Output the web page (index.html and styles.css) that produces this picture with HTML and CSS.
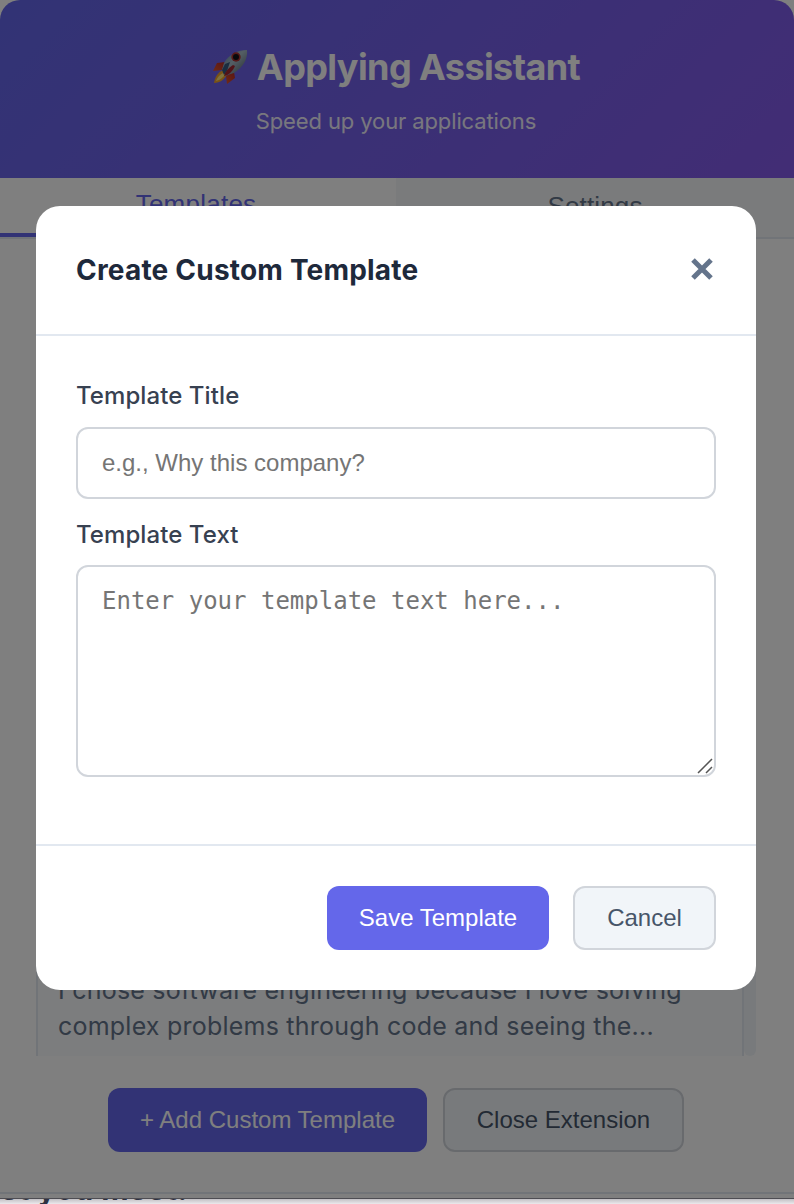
FILE: index.html
```html
<!DOCTYPE html>
<html lang="en">
<head>
<meta charset="utf-8">
<title>Applying Assistant</title>
<link rel="stylesheet" href="styles.css">
</head>
<body>
<div class="popup">
  <header class="header">
    <h1 class="brand">
      <svg class="rocket" viewBox="0 0 36 36">
        <defs>
          <linearGradient id="hull" x1="0" y1="0" x2="1" y2="1">
            <stop offset="0" stop-color="#477aa8"/><stop offset=".45" stop-color="#a9bdc9"/><stop offset="1" stop-color="#4b5b66"/>
          </linearGradient>
          <linearGradient id="fin" x1="1" y1="0" x2="0" y2="1">
            <stop offset="0" stop-color="#b52a25"/><stop offset="1" stop-color="#e0552b"/>
          </linearGradient>
        </defs>
        <path d="M13 13 5 14 1 22l9-1z" fill="url(#fin)"/>
        <path d="M22 23l1 6-8 6-1-8z" fill="url(#fin)"/>
        <path d="M11 21c-5 2-8 7-9 13 6 0 11-4 13-9z" fill="#f3a52a"/>
        <path d="M11 24c-4 2-6 5-7 8 4-1 8-4 9-7z" fill="#ffe77a"/>
        <path d="M35 1C26 1 17 5 12 14l-2 7 5 5 7-2C31 18 36 10 35 1z" fill="url(#hull)"/>
        <path d="M10 21l3-6 5-2-3 9-3 4z" fill="#355a80"/>
        <path d="M21 16c-5 3-8 7-9 11 5-1 9-5 11-10z" fill="#a32730"/>
        <circle cx="24" cy="8" r="4.7" fill="#ad3030"/>
        <circle cx="24" cy="8" r="3" fill="#111318"/>
      </svg>
      <span>Applying Assistant</span>
    </h1>
    <p class="tagline">Speed up your applications</p>
  </header>
  <nav class="tabs">
    <button class="tab tab-active">Templates</button>
    <button class="tab">Settings</button>
  </nav>
  <main class="content">
    <div class="list">
      <article class="card">I chose software engineering because I love solving<br>complex problems through code and seeing the...</article>
      <div class="scrollbar"></div>
    </div>
    <div class="actions">
      <button class="btn btn-primary btn-add">+ Add Custom Template</button>
      <button class="btn btn-secondary btn-close">Close Extension</button>
    </div>
  </main>
</div>
<div class="page-strip"><p class="page-text">et you meet!</p></div>
<div class="overlay">
  <section class="modal">
    <header class="modal-header">
      <h2 class="modal-title">Create Custom Template</h2>
      <svg class="close" viewBox="0 0 22 22"><path d="M2 2l18 18M20 2L2 20"/></svg>
    </header>
    <div class="modal-body">
      <label class="label" for="title">Template Title</label>
      <input class="field input" id="title" placeholder="e.g., Why this company?">
      <label class="label label-text" for="text">Template Text</label>
      <div class="textarea-wrap">
        <textarea class="field textarea" id="text" placeholder="Enter your template text here..."></textarea>
        <svg class="grip" viewBox="0 0 16 16"><path d="M1 15L15 1M9 15l6-6"/></svg>
      </div>
    </div>
    <footer class="modal-footer">
      <button class="btn btn-primary btn-save">Save Template</button>
      <button class="btn btn-secondary btn-cancel">Cancel</button>
    </footer>
  </section>
</div>
</body>
</html>
```
FILE: styles.css
```css
* { box-sizing: border-box; }
body {
  margin: 0;
  height: 1204px;
  overflow: hidden;
  position: relative;
  background: #fff;
  font-family: Inter, "Liberation Sans", sans-serif;
}
h1, h2, p { margin: 0; }
button { font-family: "Liberation Sans", Arial, sans-serif; margin: 0; padding: 0; border: 0; }

.popup {
  height: 1199px;
  display: flex;
  flex-direction: column;
  border-bottom: 1px solid #4e4d53;
}
.header {
  height: 178px;
  flex: none;
  display: flex;
  flex-direction: column;
  align-items: center;
  padding-right: 2px;
  border-radius: 20px 20px 0 0;
  background: linear-gradient(135deg, #6467ea, #855aeb);
  color: #fff;
}
.brand {
  display: flex;
  align-items: center;
  gap: 9px;
  margin-top: 45px;
  height: 44px;
  font-size: 36px;
  font-weight: 700;
  letter-spacing: -0.6px;
  white-space: nowrap;
}
.rocket { width: 36px; height: 36px; }
.tagline {
  margin-top: 18px;
  line-height: 28px;
  font-size: 22px;
  letter-spacing: -0.12px;
  opacity: 0.9;
}
.tabs { display: flex; height: 61px; flex: none; border-bottom: 2px solid #e2e8f0; }
.tab {
  flex: 1;
  height: 59px;
  padding-bottom: 3px;
  background: #f4f6f8;
  color: #64748b;
  font-size: 26px;
  letter-spacing: 0.15px;
}
.tab-active {
  flex: none;
  width: 396px;
  padding: 0 4px 3px 0;
  background: #fff;
  color: #6467ea;
  border-bottom: 4px solid #6467ea;
  letter-spacing: 0.25px;
}
.content { flex: 1; display: flex; flex-direction: column; border-bottom: 2px solid #e2e8f0; margin-bottom: 4px; }
.list { display: flex; height: 817px; padding: 0 38px 0 36px; align-items: flex-end; }
.card {
  width: 708px;
  height: 200px;
  padding: 116px 20px 0;
  background: #f8fafc;
  border: solid #e2e8f0;
  border-width: 0 2px;
  color: #64748b;
  font-size: 25px;
  line-height: 36px;
  white-space: nowrap;
  letter-spacing: 0.22px;
}
.scrollbar { width: 12px; height: 200px; border-radius: 0 0 6px 6px; background: #f1f5f9; }
.actions { display: flex; justify-content: center; gap: 16px; margin-top: 32px; padding-right: 2px; }
.btn { height: 64px; border-radius: 12px; font-size: 24px; white-space: nowrap; }
.btn-primary { background: #6467ea; color: #fff; }
.btn-secondary { background: #f1f5f9; color: #475569; border: 2px solid #d1d5db; }
.btn-add { width: 319px; }
.btn-close { width: 241px; }

.page-strip { height: 5px; overflow: hidden; background: linear-gradient(#c2c0c4, #ebe9ec); }
.page-text { margin-top: -28px; font-size: 30px; line-height: 36px; font-weight: 700; color: #2d3142; letter-spacing: 0.5px; }

.overlay {
  position: absolute;
  inset: 0 0 6px;
  padding: 206px 38px 0 36px;
  background: rgba(0, 0, 0, 0.5);
}
.modal { height: 784px; background: #fff; border-radius: 24px; display: flex; flex-direction: column; }
.modal-header {
  height: 130px;
  flex: none;
  padding: 0 43px 2px 40px;
  display: flex;
  align-items: center;
  justify-content: space-between;
  border-bottom: 2px solid #e2e8f0;
}
.modal-title { padding-top: 2px; font-size: 28px; font-weight: 700; color: #1e293b; letter-spacing: 0.2px; }
.close { width: 22px; height: 22px; fill: none; stroke: #64748b; stroke-width: 5; }
.modal-body { height: 508px; flex: none; padding: 42px 40px 0; display: flex; flex-direction: column; }
.label { line-height: 36px; margin-bottom: 13px; font-size: 24px; font-weight: 500; color: #374151; letter-spacing: 0.08px; }
.label-text { margin-top: 18px; margin-bottom: 12px; }
.field {
  display: block;
  width: 100%;
  margin: 0;
  border: 2px solid #d1d5db;
  border-radius: 12px;
  background: #fff;
  font-size: 24px;
}
.field::placeholder { color: #757575; opacity: 1; }
.input { height: 72px; padding: 0 24px; font-family: "Liberation Sans", Arial, sans-serif; }
.textarea-wrap { position: relative; }
.textarea { height: 212px; padding: 20px 24px; resize: none; font-family: "DejaVu Sans Mono", monospace; line-height: 28px; }
.grip { position: absolute; right: 3px; bottom: 3px; width: 16px; height: 16px; fill: none; stroke: #555; stroke-width: 1.5; }
.modal-footer {
  flex: 1;
  display: flex;
  justify-content: flex-end;
  gap: 24px;
  padding: 40px 40px 0;
  border-top: 2px solid #e2e8f0;
}
.btn-save { width: 222px; }
.btn-cancel { width: 143px; }
```
